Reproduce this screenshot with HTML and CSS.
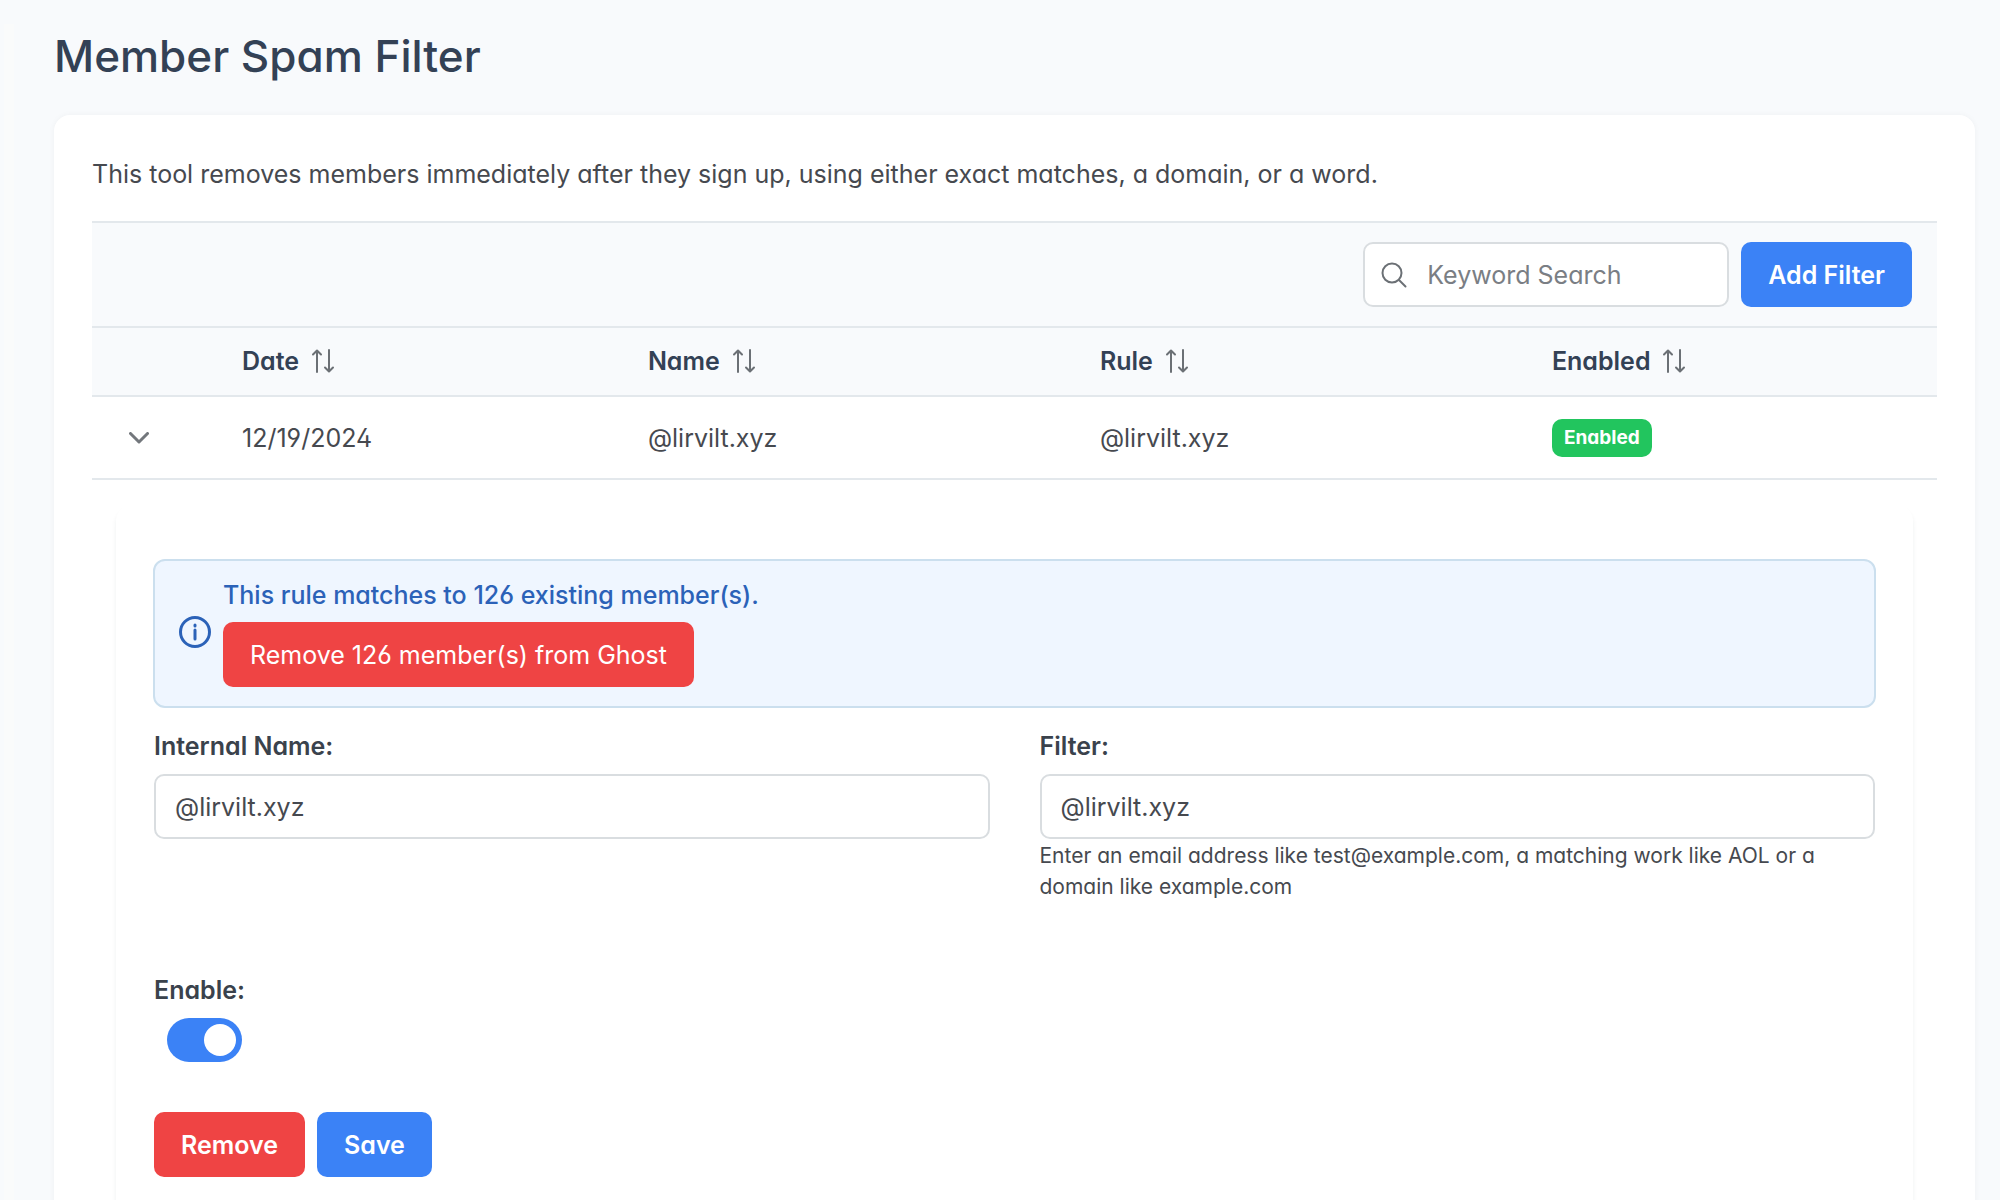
FILE: index.html
```html
<!DOCTYPE html>
<html lang="en">
<head>
<meta charset="utf-8">
<meta name="viewport" content="width=device-width, initial-scale=1">
<title>Member Spam Filter</title>
<link rel="stylesheet" href="styles.css">
</head>
<body>
<svg class="sprite" aria-hidden="true">
  <symbol id="sort" viewBox="0 0 24 24">
    <path d="M6 23V2M2 5.500L6 1.500L10 5.500M18 1V22M14 18.500L18 22.500L22 18.500"/>
  </symbol>
</svg>
<main class="page">
  <h1 class="page-title">Member Spam Filter</h1>
  <section class="card">
    <p class="intro">This tool removes members immediately after they sign up, using either exact matches, a domain, or a word.</p>
    <div class="toolbar">
      <label class="search">
        <svg class="search-icon" viewBox="0 0 26 26" aria-hidden="true"><circle cx="11" cy="11" r="9.500"/><path d="M18 18L24.500 24.500"/></svg>
        <input class="field search-field" type="text" placeholder="Keyword Search" aria-label="Keyword Search">
      </label>
      <button class="button strong" type="button">Add Filter</button>
    </div>
    <table class="filters">
      <colgroup><col class="col-toggle"><col class="col-date"><col class="col-name"><col class="col-rule"><col class="col-enabled"></colgroup>
      <thead>
        <tr>
          <th></th>
          <th><span class="heading">Date <svg class="sort-icon" aria-hidden="true"><use href="#sort"/></svg></span></th>
          <th><span class="heading">Name <svg class="sort-icon" aria-hidden="true"><use href="#sort"/></svg></span></th>
          <th><span class="heading">Rule <svg class="sort-icon" aria-hidden="true"><use href="#sort"/></svg></span></th>
          <th><span class="heading">Enabled <svg class="sort-icon" aria-hidden="true"><use href="#sort"/></svg></span></th>
        </tr>
      </thead>
      <tbody>
        <tr class="filter-row">
          <td><button class="expander" type="button" aria-label="Collapse row" aria-expanded="true"><svg class="chevron" viewBox="0 0 20 12" aria-hidden="true"><path d="M1.500 1.500L10 10L18.500 1.500"/></svg></button></td>
          <td>12/19/2024</td>
          <td>@lirvilt.xyz</td>
          <td>@lirvilt.xyz</td>
          <td><span class="badge">Enabled</span></td>
        </tr>
        <tr>
          <td class="detail" colspan="5">
            <form class="panel">
              <div class="message">
                <svg class="info-icon" viewBox="0 0 32 32" aria-hidden="true"><circle cx="16" cy="16" r="14.500"/><path d="M16 14V23"/><path d="M16 9V10"/></svg>
                <div class="message-body">
                  <span>This rule matches to 126 existing member(s).</span>
                  <button class="button danger" type="button">Remove 126 member(s) from Ghost</button>
                </div>
              </div>
              <div class="fields">
                <div class="form-item">
                  <label for="internal-name">Internal Name:</label>
                  <input class="field" id="internal-name" type="text" value="@lirvilt.xyz">
                </div>
                <div class="form-item">
                  <label for="filter">Filter:</label>
                  <input class="field" id="filter" type="text" value="@lirvilt.xyz" aria-describedby="filter-help">
                  <small class="help" id="filter-help">Enter an email address like test@example.com, a matching work like AOL or a domain like example.com</small>
                </div>
              </div>
              <div class="form-item enable">
                <label for="enable">Enable:</label>
                <input class="switch" id="enable" type="checkbox" role="switch" checked>
              </div>
              <div class="actions">
                <button class="button strong danger" type="button">Remove</button>
                <button class="button strong" type="button">Save</button>
              </div>
            </form>
          </td>
        </tr>
      </tbody>
    </table>
  </section>
</main>
</body>
</html>
```
FILE: styles.css
```css
*, *::before, *::after { box-sizing: border-box; }

body {
  margin: 0;
  background: linear-gradient(#fafbfb, #fafbfb) 4px 24px / 10px 100% no-repeat #f8fafc;
  color: #46494f;
  font-family: Inter, "Liberation Sans", sans-serif;
  font-feature-settings: "cv02", "cv03", "cv04", "cv11";
  font-size: 25px;
  line-height: 38px;
}

input, button { font: inherit; font-feature-settings: inherit; letter-spacing: inherit; }
svg { fill: none; stroke: currentColor; stroke-width: 2; stroke-linecap: round; stroke-linejoin: round; }

.sprite { position: absolute; width: 0; height: 0; }

.page { padding: 28px 25px 0 54px; }

.page-title {
  margin: 0 0 31px;
  color: #334155;
  font-size: 44px;
  font-weight: 500;
  line-height: 56px;
}

.card {
  padding: 40px 38px;
  border-radius: 16px;
  background: #fff;
  box-shadow: 0 0 6px rgba(30, 50, 60, 0.04);
}

.intro { margin: 0 0 28px; }

.toolbar {
  display: flex;
  justify-content: flex-end;
  gap: 12px;
  padding: 19px 25px;
  border-top: 2px solid #e3e8ec;
  border-bottom: 2px solid #e3e8ec;
  background: #f8fafc;
}

.field {
  width: 100%;
  height: 65px;
  padding: 0 19px;
  border: 2px solid #d9dde0;
  border-radius: 10px;
  background: #fff;
  color: #46494f;
}

.search { display: grid; align-items: center; width: 366px; }
.search > * { grid-area: 1 / 1; }
.search-icon { z-index: 1; width: 26px; height: 26px; margin-left: 18px; color: #6b7075; }
.search-field { padding-left: 62px; }
.search-field::placeholder { color: #7a7e84; opacity: 1; }

.button {
  height: 65px;
  padding: 0 27px;
  border: 0;
  border-radius: 10px;
  background: #3b82f6;
  color: #fff;
}
.strong { font-weight: 600; }
.danger { background: #ef4444; }

.filters { width: 100%; border-collapse: collapse; table-layout: fixed; }
.col-toggle { width: 125px; }
.col-date { width: 22%; }
.col-name, .col-rule { width: 24.500%; }

.filters th, .filters td {
  padding: 15px 25px;
  border-bottom: 2px solid #e3e8ec;
  text-align: left;
}
.filters th { padding: 14px 25px 15px; background: #f8fafc; color: #334155; font-weight: 600; }
.filters .filter-row td { height: 83px; padding: 12px 25px; }
.heading { display: flex; align-items: center; gap: 12px; }
.sort-icon { width: 24px; height: 24px; color: #6b7075; }

.expander {
  display: grid;
  place-items: center;
  width: 44px;
  height: 44px;
  padding: 0;
  border: 0;
  background: none;
  color: #73777c;
}
.chevron { width: 20px; height: 12px; stroke-width: 3; }

.badge {
  display: block;
  width: fit-content;
  padding: 0 12px;
  border-radius: 10px;
  background: #22c55e;
  color: #fff;
  font-size: 19px;
  font-weight: 700;
}

.filters .detail { padding: 25px 24px; border: 0; }

.panel {
  padding: 54px 38px 38px;
  border-radius: 16px;
  box-shadow: 0 4px 5px rgba(30, 50, 60, 0.07);
}

.message {
  display: flex;
  align-items: center;
  gap: 12px;
  margin: 0 -1px 19px;
  padding: 15px 24px 19px;
  border: 2px solid #cbdfee;
  border-radius: 12px;
  background: #eff6ff;
  color: #2b62b8;
  font-weight: 500;
}
.info-icon { width: 32px; height: 32px; stroke-width: 3; }
.message-body { display: grid; justify-items: start; gap: 8px; }
.message .button { font-weight: 400; }

.fields { display: grid; grid-template-columns: 1fr 1fr; gap: 50px; }
.form-item label { display: block; margin-bottom: 9px; color: #3a424c; font-weight: 600; }
.help { display: block; margin-top: 1px; font-size: 21px; line-height: 31px; }

.enable { margin: 69px 0 50px; }
.switch {
  appearance: none;
  display: block;
  width: 75px;
  height: 44px;
  margin: 0 0 0 13px;
  padding: 6px;
  border-radius: 22px;
  background: #3b82f6;
}
.switch::before {
  content: "";
  display: block;
  width: 32px;
  height: 32px;
  border-radius: 50%;
  background: #fff;
}
.switch:not(:checked) { background: #cbd5e1; }
.switch:checked::before { margin-left: auto; }

.actions { display: flex; gap: 12px; }
```
